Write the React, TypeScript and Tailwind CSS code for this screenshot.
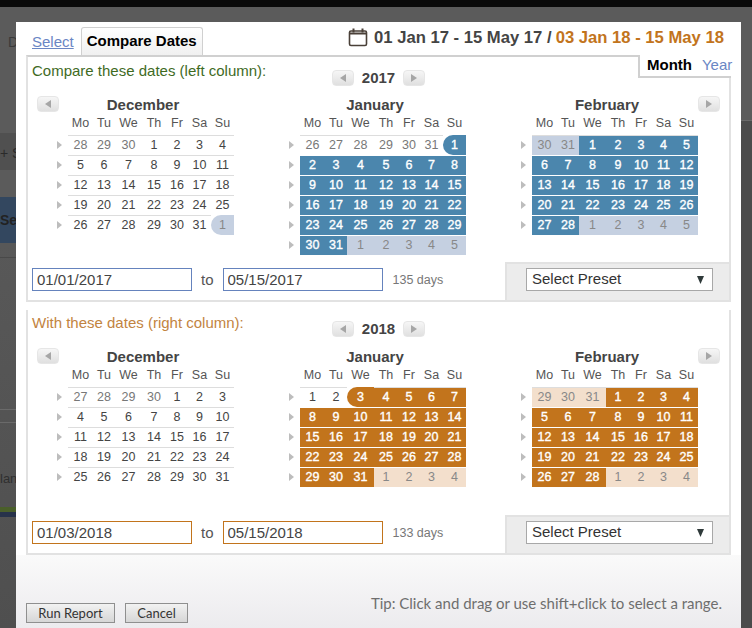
const WEEK = ["Mo", "Tu", "We", "Th", "Fr", "Sa", "Su"]

type Tone = "blue" | "orange"

type Month = {
  name: string
  prevStart: number // first day shown from the previous month
  lead: number // how many previous-month days
  days: number
  total: number
  active?: [number, number]
  muted?: [number, number][]
  round?: number
}

const topMonths: Month[] = [
  { name: "December", prevStart: 28, lead: 3, days: 31, total: 35, muted: [[34, 34]], round: 34 },
  { name: "January", prevStart: 26, lead: 6, days: 31, total: 42, active: [6, 36], muted: [[37, 41]], round: 6 },
  { name: "February", prevStart: 30, lead: 2, days: 28, total: 35, active: [2, 29], muted: [[0, 1], [30, 34]] },
]

const bottomMonths: Month[] = [
  { name: "December", prevStart: 27, lead: 4, days: 31, total: 35 },
  { name: "January", prevStart: 1, lead: 0, days: 31, total: 35, active: [2, 30], muted: [[31, 34]], round: 2 },
  { name: "February", prevStart: 29, lead: 3, days: 28, total: 35, active: [3, 30], muted: [[0, 2], [31, 34]] },
]

function NavButton({ dir }: { dir: "left" | "right" }) {
  return (
    <div className="flex h-[16px] w-[22px] items-center justify-center rounded-[4px] border border-[#e6e6e6] bg-gradient-to-b from-[#f6f6f6] to-[#e0e0e0]">
      <svg width="6" height="8" viewBox="0 0 6 8">
        <path d={dir === "left" ? "M6 0V8L0 4Z" : "M0 0V8L6 4Z"} fill="#a6a6a6" />
      </svg>
    </div>
  )
}

function Calendar({ month, tone }: { month: Month; tone: Tone }) {
  const cells = Array.from({ length: month.total }, (_, i) => {
    const inMonth = i >= month.lead && i < month.lead + month.days
    const label = i < month.lead ? month.prevStart + i : inMonth ? i - month.lead + 1 : i - month.lead - month.days + 1
    const active = !!month.active && i >= month.active[0] && i <= month.active[1]
    const muted = !!month.muted && month.muted.some(([a, b]) => i >= a && i <= b)
    return { i, label, inMonth, active, muted }
  })
  const rows = Array.from({ length: month.total / 7 }, (_, r) => cells.slice(r * 7, r * 7 + 7))

  const activeBg = tone === "blue" ? "bg-[#4b86ad]" : "bg-[#c2741c]"
  const mutedBg = tone === "blue" ? "bg-[#c5d0e1]" : "bg-[#f3dfcc]"

  return (
    <div className="w-[177px]">
      <div className="h-[18px] pr-[5px] text-center text-[15px] leading-[18px] font-bold text-[#444]">{month.name}</div>
      <div className="ml-[11px] grid h-[21px] grid-cols-[25px_22px_27px_24px_22px_23px_23px] pb-[2px] text-center text-[12.5px] leading-[18px] text-[#555]">
        {WEEK.map((d) => (
          <div key={d}>{d}</div>
        ))}
      </div>
      {rows.map((row, r) => (
        <div key={r} className="flex h-[20px]">
          <div className="flex w-[11px] items-center">
            <svg width="5" height="8" viewBox="0 0 5 8">
              <path d="M0 0V8L5 4Z" fill="#bdbdbd" />
            </svg>
          </div>
          <div className="grid flex-1 grid-cols-[25px_22px_27px_24px_22px_23px_23px] text-center text-[12.5px] leading-[19px]">
            {row.map((c) => (
              <div
                key={c.i}
                className={[
                  "border-t",
                  c.active
                    ? `${activeBg} text-white [-webkit-text-stroke:0.35px_white] ${r > 0 ? "border-white" : "border-[#ddd]"}`
                    : c.muted
                      ? `${mutedBg} text-[#888] ${r > 0 ? "border-white" : "border-[#ddd]"}`
                      : `border-[#ddd] ${c.inMonth ? "text-[#444]" : "text-[#777]"}`,
                  c.i === month.round ? "rounded-l-[10px] border-t-0 leading-[20px]" : "",
                ].join(" ")}
              >
                {c.label}
              </div>
            ))}
          </div>
        </div>
      ))}
    </div>
  )
}

function Panel({
  label,
  year,
  months,
  from,
  to,
  days,
  tone,
  first,
}: {
  label: string
  year: string
  months: Month[]
  from: string
  to: string
  days: string
  tone: Tone
  first?: boolean
}) {
  const inputBorder = tone === "blue" ? "border-[#6583bd]" : "border-[#c2741c]"
  const inputCls = `h-[23px] w-[160px] border ${inputBorder} pl-[4px] text-[15px] text-[#444] outline-none`

  return (
    <div className={`relative mx-[10px] flex flex-col border-x-2 border-b-2 border-[#e2e2e2] ${first ? "border-t-2 border-t-[#d0d0d0]" : ""}`}>
      {first && (
        <div className="absolute -top-[2px] -right-[2px] flex h-[23px] w-[93px] items-center border-b-2 border-l-2 border-[#d0d0d0] bg-white pl-[7px] text-[15px]">
          <span className="font-bold text-black">Month</span>
          <span className="mx-[5px] h-[15px] w-px bg-[#333]"></span>
          <span className="text-[#6a86c4]">Year</span>
        </div>
      )}

      <div className={`flex items-start ${first ? "h-[39px]" : "h-[38px]"}`}>
        <div
          className={`${first ? "mt-[4px]" : "mt-[3px]"} w-[304px] pl-[4px] text-[15px] leading-[20px] ${tone === "blue" ? "text-[#3f6b1f]" : "text-[#c2843f]"}`}
        >
          {label}
        </div>
        <div className={`${first ? "mt-[13px]" : "mt-[11px]"} flex items-center`}>
          <NavButton dir="left" />
          <span className="w-[49px] text-center text-[15px] leading-[16px] font-bold text-[#444]">{year}</span>
          <NavButton dir="right" />
        </div>
      </div>

      <div className={`relative flex ${first ? "h-[166px]" : "h-[167px]"} gap-[55px] pl-[29px]`}>
        <div className="absolute top-0 left-[9px]">
          <NavButton dir="left" />
        </div>
        <div className="absolute top-0 left-[670px]">
          <NavButton dir="right" />
        </div>
        {months.map((m) => (
          <Calendar key={m.name} month={m} tone={tone} />
        ))}
      </div>

      <div className="flex h-[38px]">
        <div className="flex flex-1 items-start gap-[9px] pt-[6px] pl-[4px]">
          <input readOnly value={from} className={inputCls} />
          <span className="text-[15px] leading-[23px] text-[#555]">to</span>
          <input readOnly value={to} className={inputCls} />
          <span className="ml-px text-[12.5px] leading-[25px] text-[#777]">{days}</span>
        </div>
        <div className="w-[224px] border-t-2 border-l-2 border-[#e2e2e2] bg-[#ececec] pt-[4px] pl-[19px]">
          <div className="flex h-[23px] w-[187px] items-center justify-between border border-[#a8a8a8] bg-white pr-[8px] pl-[5px] text-[15px] text-[#333]">
            <span>Select Preset</span>
            <svg width="7" height="8" viewBox="0 0 7 8">
              <path d="M0 0H7L3.5 8Z" fill="#2f3a3a" />
            </svg>
          </div>
        </div>
      </div>
    </div>
  )
}

export default function App() {
  return (
    <div className="relative h-[628px] w-[752px] overflow-hidden bg-[#5b5b5b] font-['Liberation_Sans',Arial,sans-serif]">
      {/* page behind the overlay, dimmed */}
      <div className="h-[7px] bg-[#0a0a0a]"></div>
      <div className="absolute top-[243px] bottom-0 left-0 w-[16px] bg-gradient-to-b from-[#585858] to-[#4f4f4f]"></div>
      <div className="absolute top-[32px] left-[8px] text-[14px] text-[#3a3a3a]">D</div>
      <div className="absolute top-[133px] left-0 flex h-[37px] w-[16px] items-center bg-[#505050] pt-[4px] text-[14px] whitespace-nowrap text-[#2a2a2a]">
        + S
      </div>
      <div className="absolute top-[197px] left-0 flex h-[46px] w-[16px] items-center bg-[#33475f] text-[14px] font-bold text-[#222]">
        Se
      </div>
      <div className="absolute top-[257px] left-0 h-px w-[16px] bg-[#494949]"></div>
      <div className="absolute top-[409px] left-0 h-px w-[16px] bg-[#6a6a6a]"></div>
      <div className="absolute top-[422px] left-0 h-px w-[16px] bg-[#6a6a6a]"></div>
      <div className="absolute top-[469px] left-0 text-[13px] text-[#2f2f2f]">lan</div>
      <div className="absolute top-[507px] left-0 h-[5px] w-[16px] bg-[#4a5f2a]"></div>
      <div className="absolute top-[512px] left-0 h-[5px] w-[16px] bg-[#27324a]"></div>
      <div className="absolute top-[120px] right-0 bottom-0 w-[11px] border-t border-[#6a6a6a] bg-[#4b4b4b]"></div>

      <div className="relative mt-[15px] ml-[16px] flex h-[606px] w-[725px] flex-col bg-white">
        <div className="flex h-[33px] items-end pl-[16px]">
          <a className="mb-[1px] text-[15px] leading-[24px] text-[#6a86c4] underline">Select</a>
          <div className="ml-[7px] flex h-[28px] w-[122px] items-center justify-center rounded-t-[3px] border-x border-t border-[#d0d0d0] bg-gradient-to-b from-white to-[#f0f0f0] text-[15px] font-bold text-black">
            Compare Dates
          </div>
          <div className="ml-auto flex items-center pr-[17px] pb-[4px] text-[16.65px] font-bold text-[#444]">
            <svg width="20" height="19" viewBox="0 0 20 19" className="mr-[6px] mb-[2px]" fill="none" stroke="#4a4038">
              <rect x="1.5" y="3" width="17" height="14.5" rx="1.5" strokeWidth="1.6" />
              <path d="M1.5 5.5H18.5" strokeWidth="2" />
              <path d="M5.5 0.5V4.5M14.5 0.5V4.5" strokeWidth="2" />
            </svg>
            <span>01 Jan 17 - 15 May 17 / </span>
            <span className="ml-[4px] text-[#c2741c]">03 Jan 18 - 15 May 18</span>
          </div>
        </div>

        <Panel
          first
          label="Compare these dates (left column):"
          year="2017"
          months={topMonths}
          from="01/01/2017"
          to="05/15/2017"
          days="135 days"
          tone="blue"
        />
        <div className="h-[8px]"></div>
        <Panel
          label="With these dates (right column):"
          year="2018"
          months={bottomMonths}
          from="01/03/2018"
          to="05/15/2018"
          days="133 days"
          tone="orange"
        />

        <div className="flex flex-1 items-end justify-between bg-gradient-to-b from-[#fafafa] to-[#ecebee] pr-[19px] pb-[5px] pl-[10px] font-['Lato',sans-serif]">
          <div className="flex gap-[10px]">
            <button className="h-[20px] w-[89px] border border-[#8f8f8f] bg-gradient-to-b from-[#f2f2f2] to-[#d6d6d6] text-[13px] leading-[18px] text-[#333]">
              Run Report
            </button>
            <button className="h-[20px] w-[63px] border border-[#8f8f8f] bg-gradient-to-b from-[#f2f2f2] to-[#d6d6d6] text-[13px] leading-[18px] text-[#333]">
              Cancel
            </button>
          </div>
          <div className="mb-[10px] text-[15px] leading-[20px] text-[#6e6e6e]">Tip: Click and drag or use shift+click to select a range.</div>
        </div>
      </div>
    </div>
  )
}
